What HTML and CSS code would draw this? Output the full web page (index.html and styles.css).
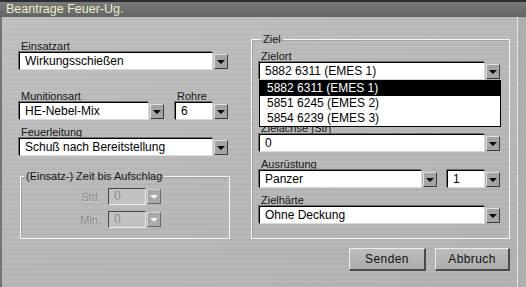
FILE: index.html
```html
<!DOCTYPE html>
<html lang="de">
<head>
<meta charset="utf-8">
<title>Beantrage Feuer-Ug.</title>
<link rel="stylesheet" href="styles.css">
</head>
<body>
<div class="window">
  <div class="titlebar">Beantrage Feuer-Ug.</div>
  <div class="panel">
    <div class="main">
      <div class="left">
        <div class="field">
          <div class="label">Einsatzart</div>
          <div class="select w-wide"><div class="box">Wirkungsschießen</div><div class="arrow"></div></div>
        </div>
        <div class="row mt-20">
          <div class="field">
            <div class="label">Munitionsart</div>
            <div class="select w-muni"><div class="box">HE-Nebel-Mix</div><div class="arrow"></div></div>
          </div>
          <div class="field">
            <div class="label">Rohre</div>
            <div class="select w-num"><div class="box">6</div><div class="arrow"></div></div>
          </div>
        </div>
        <div class="field mt-6">
          <div class="label">Feuerleitung</div>
          <div class="select w-wide"><div class="box">Schuß nach Bereitstellung</div><div class="arrow"></div></div>
        </div>
        <fieldset class="group zeit">
          <legend>(Einsatz-) Zeit bis Aufschlag</legend>
          <div class="trow">
            <span class="tlabel">Std.</span>
            <div class="select small disabled"><div class="box">0</div><div class="arrow"></div></div>
          </div>
          <div class="trow mt-6">
            <span class="tlabel">Min.</span>
            <div class="select small disabled"><div class="box">0</div><div class="arrow"></div></div>
          </div>
        </fieldset>
      </div>
      <fieldset class="group ziel">
        <legend>Ziel</legend>
        <div class="field">
          <div class="label">Zielort</div>
          <div class="select w-ziel open">
            <div class="box">5882 6311 (EMES 1)</div><div class="arrow"></div>
            <ul class="list">
              <li class="sel">5882 6311 (EMES 1)</li>
              <li>5851 6245 (EMES 2)</li>
              <li>5854 6239 (EMES 3)</li>
            </ul>
          </div>
        </div>
        <div class="field mt-42">
          <div class="label">Zielachse [Str]</div>
          <div class="select w-ziel"><div class="box">0</div><div class="arrow"></div></div>
        </div>
        <div class="row mt-6 gap-10">
          <div class="field">
            <div class="label">Ausrüstung</div>
            <div class="select w-panzer"><div class="box">Panzer</div><div class="arrow"></div></div>
          </div>
          <div class="field">
            <div class="label">&nbsp;</div>
            <div class="select w-num"><div class="box">1</div><div class="arrow"></div></div>
          </div>
        </div>
        <div class="field mt-6">
          <div class="label">Zielhärte</div>
          <div class="select w-ziel"><div class="box">Ohne Deckung</div><div class="arrow"></div></div>
        </div>
      </fieldset>
    </div>
    <div class="buttons">
      <button class="btn w-senden">Senden</button>
      <button class="btn w-abbruch">Abbruch</button>
    </div>
  </div>
</div>
</body>
</html>
```
FILE: styles.css
```css
* { box-sizing: border-box; }
html, body { margin: 0; padding: 0; }
body {
  width: 526px;
  height: 287px;
  overflow: hidden;
  font-family: "Liberation Sans", Arial, sans-serif;
  color: #111;
}
.window {
  width: 526px;
  height: 287px;
  display: flex;
  flex-direction: column;
  background-color: #adadad;
  background-image: repeating-linear-gradient(0deg, rgba(255,255,255,0.04) 0 1px, rgba(0,0,0,0) 1px 3px);
}
.titlebar {
  height: 17px;
  border-top: 2px solid #2c2c2c;
  background: linear-gradient(#7a7a7a, #646464);
  color: #efeec4;
  font-size: 12.5px;
  line-height: 15px;
  padding-left: 6px;
  white-space: nowrap;
}
.panel {
  flex: 1;
  margin-right: 8px;
  border-left: 2px solid #747474;
  border-right: 1px solid #e4e4e4;
  background-color: #bbbbbb;
  background-image:
    repeating-linear-gradient(0deg, rgba(255,255,255,0.05) 0 1px, rgba(0,0,0,0) 1px 2px, rgba(0,0,0,0.02) 2px 3px, rgba(0,0,0,0) 3px 5px),
    linear-gradient(160deg, rgba(255,255,255,0.05), rgba(0,0,0,0.05));
  padding: 16px 7px 0 17px;
  display: flex;
  flex-direction: column;
}
.main {
  display: flex;
  align-items: flex-start;
  gap: 21px;
}
.left {
  width: 211px;
  margin-top: 7px;
  display: flex;
  flex-direction: column;
}
.row { display: flex; gap: 11px; }
.gap-10 { gap: 10px; }
.mt-6 { margin-top: 6px; }
.mt-20 { margin-top: 20px; }
.mt-42 { margin-top: 42px; }

.label {
  font-size: 11px;
  line-height: 12px;
  height: 12px;
  padding-left: 2px;
  white-space: nowrap;
  color: #161616;
}

.select {
  position: relative;
  display: flex;
  align-items: center;
  height: 18px;
}
.w-wide { width: 209px; }
.w-muni { width: 145px; }
.w-num { width: 53px; }
.w-ziel { width: 241px; }
.w-panzer { width: 178px; }

.box {
  flex: 1;
  height: 18px;
  background: #fff;
  border-style: solid;
  border-width: 1px;
  border-color: #000 #dcdcdc #dcdcdc #000;
  box-shadow: -1px -1px 0 #6e6e6e;
  font-size: 12px;
  line-height: 16px;
  padding-left: 5px;
  white-space: nowrap;
  overflow: hidden;
  color: #000;
}
.arrow {
  position: relative;
  width: 14px;
  height: 15px;
  margin-left: 1px;
  background: #a4a4a4;
  border-style: solid;
  border-width: 1px;
  border-color: #dedede #3c3c3c #3c3c3c #dedede;
}
.arrow::after {
  content: "";
  position: absolute;
  left: 2px;
  top: 5px;
  border-left: 4px solid transparent;
  border-right: 4px solid transparent;
  border-top: 4px solid #000;
}

.list {
  position: absolute;
  top: 18px;
  left: 0;
  width: 242px;
  margin: 0;
  padding: 0;
  list-style: none;
  background: #fff;
  border: 1px solid #000;
  z-index: 2;
}
.list li {
  height: 15px;
  font-size: 12px;
  line-height: 15px;
  padding-left: 7px;
  color: #000;
  white-space: nowrap;
}
.list li.sel { background: #000; color: #fff; }

.group {
  margin: 0;
  border: 1px solid #f6f6f6;
  box-shadow: inset 1px 1px 0 rgba(0,0,0,0.12);
  min-width: 0;
}
.group legend {
  font-size: 11px;
  line-height: 12px;
  padding: 0 2px;
  white-space: nowrap;
  color: #161616;
}
.zeit {
  width: 210px;
  margin: 14px 0 0 1px;
  padding: 6px 0 10px 0;
}
.zeit legend { margin-left: 3px; }
.ziel {
  width: 261px;
  padding: 5px 0 14px 7px;
}
.ziel legend { margin-left: 2px; }

.trow { display: flex; align-items: center; }
.tlabel {
  width: 80px;
  margin-right: 7px;
  text-align: right;
  font-size: 11px;
  color: #8a8a8a;
  text-shadow: 1px 1px 0 rgba(255,255,255,0.35);
}
.select.small { width: 53px; height: 17px; }
.select.small .box { height: 17px; line-height: 15px; }
.disabled .box {
  background: #c2c2c2;
  color: #8c8c8c;
  border-color: #444 #efefef #efefef #444;
  box-shadow: none;
}
.disabled .arrow { background: #a9a9a9; border-color: #d0d0d0 #6a6a6a #6a6a6a #d0d0d0; }
.disabled .arrow::after { border-top-color: #f2f2f2; }

.buttons {
  display: flex;
  justify-content: flex-end;
  gap: 9px;
  margin-top: 9px;
}
.btn {
  height: 23px;
  padding: 0;
  font-family: "Liberation Sans", Arial, sans-serif;
  font-size: 12px;
  letter-spacing: 0.4px;
  color: #111;
  background: linear-gradient(#bcbcbc, #acacac);
  border-style: solid;
  border-width: 1px 2px 2px 1px;
  border-color: #ececec #4a4a4a #4a4a4a #ececec;
}
.w-senden { width: 77px; }
.w-abbruch { width: 75px; }
```
